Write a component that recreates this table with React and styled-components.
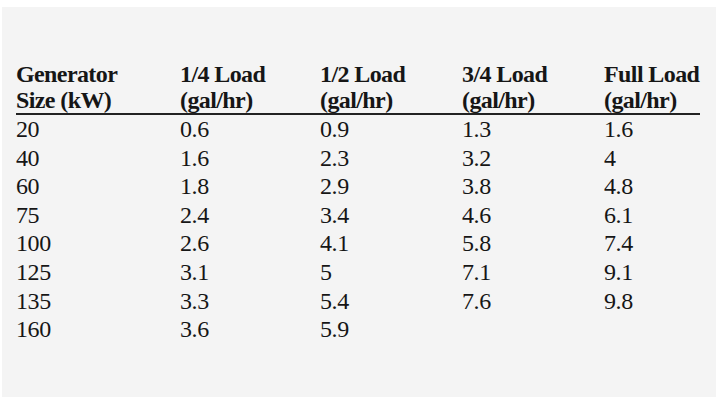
import React from 'react';
import styled, { createGlobalStyle } from 'styled-components';

const GlobalStyle = createGlobalStyle`
    html, body {
        margin: 0;
        padding: 0;
        background: #ffffff;
    }
`;

const columns = [
    { top: 'Generator', bottom: 'Size (kW)' },
    { top: '1/4 Load', bottom: '(gal/hr)' },
    { top: '1/2 Load', bottom: '(gal/hr)' },
    { top: '3/4 Load', bottom: '(gal/hr)' },
    { top: 'Full Load', bottom: '(gal/hr)' },
];

const rows = [
    ['20', '0.6', '0.9', '1.3', '1.6'],
    ['40', '1.6', '2.3', '3.2', '4'],
    ['60', '1.8', '2.9', '3.8', '4.8'],
    ['75', '2.4', '3.4', '4.6', '6.1'],
    ['100', '2.6', '4.1', '5.8', '7.4'],
    ['125', '3.1', '5', '7.1', '9.1'],
    ['135', '3.3', '5.4', '7.6', '9.8'],
    ['160', '3.6', '5.9', '', ''],
];

const App = () => {
    return (
        <>
            <GlobalStyle />
            <Panel>
                <Table>
                    <HeadRow>
                        {columns.map((c, i) => (
                            <HeadCell key={i}>
                                {c.top}
                                <br />
                                {c.bottom}
                            </HeadCell>
                        ))}
                    </HeadRow>
                    {rows.map((r, i) => (
                        <Row key={i}>
                            {r.map((v, j) => (
                                <Cell key={j}>{v}</Cell>
                            ))}
                        </Row>
                    ))}
                </Table>
            </Panel>
        </>
    );
};

const Panel = styled.div`
    margin: 7px 3px 0 2px;
    height: 390px;
    background-color: #f4f4f4;
    padding: 54px 0 0 14px;
    box-sizing: border-box;
    font-family: "Liberation Serif", "Times New Roman", serif;
    color: #161616;
`;

const Table = styled.div`
    display: flex;
    flex-direction: column;
    width: 684px;
`;

const Grid = styled.div`
    display: grid;
    grid-template-columns: 164px 140px 142px 142px 96px;
`;

const HeadRow = styled(Grid)`
    border-bottom: 2px solid #222222;
`;

const HeadCell = styled.div`
    font-size: 24px;
    font-weight: bold;
    line-height: 26px;
    letter-spacing: -0.6px;
    white-space: nowrap;
`;

const Row = styled(Grid)``;

const Cell = styled.div`
    font-size: 24px;
    line-height: 28.6px;
    letter-spacing: -0.4px;
    white-space: nowrap;
`;

export default App;
